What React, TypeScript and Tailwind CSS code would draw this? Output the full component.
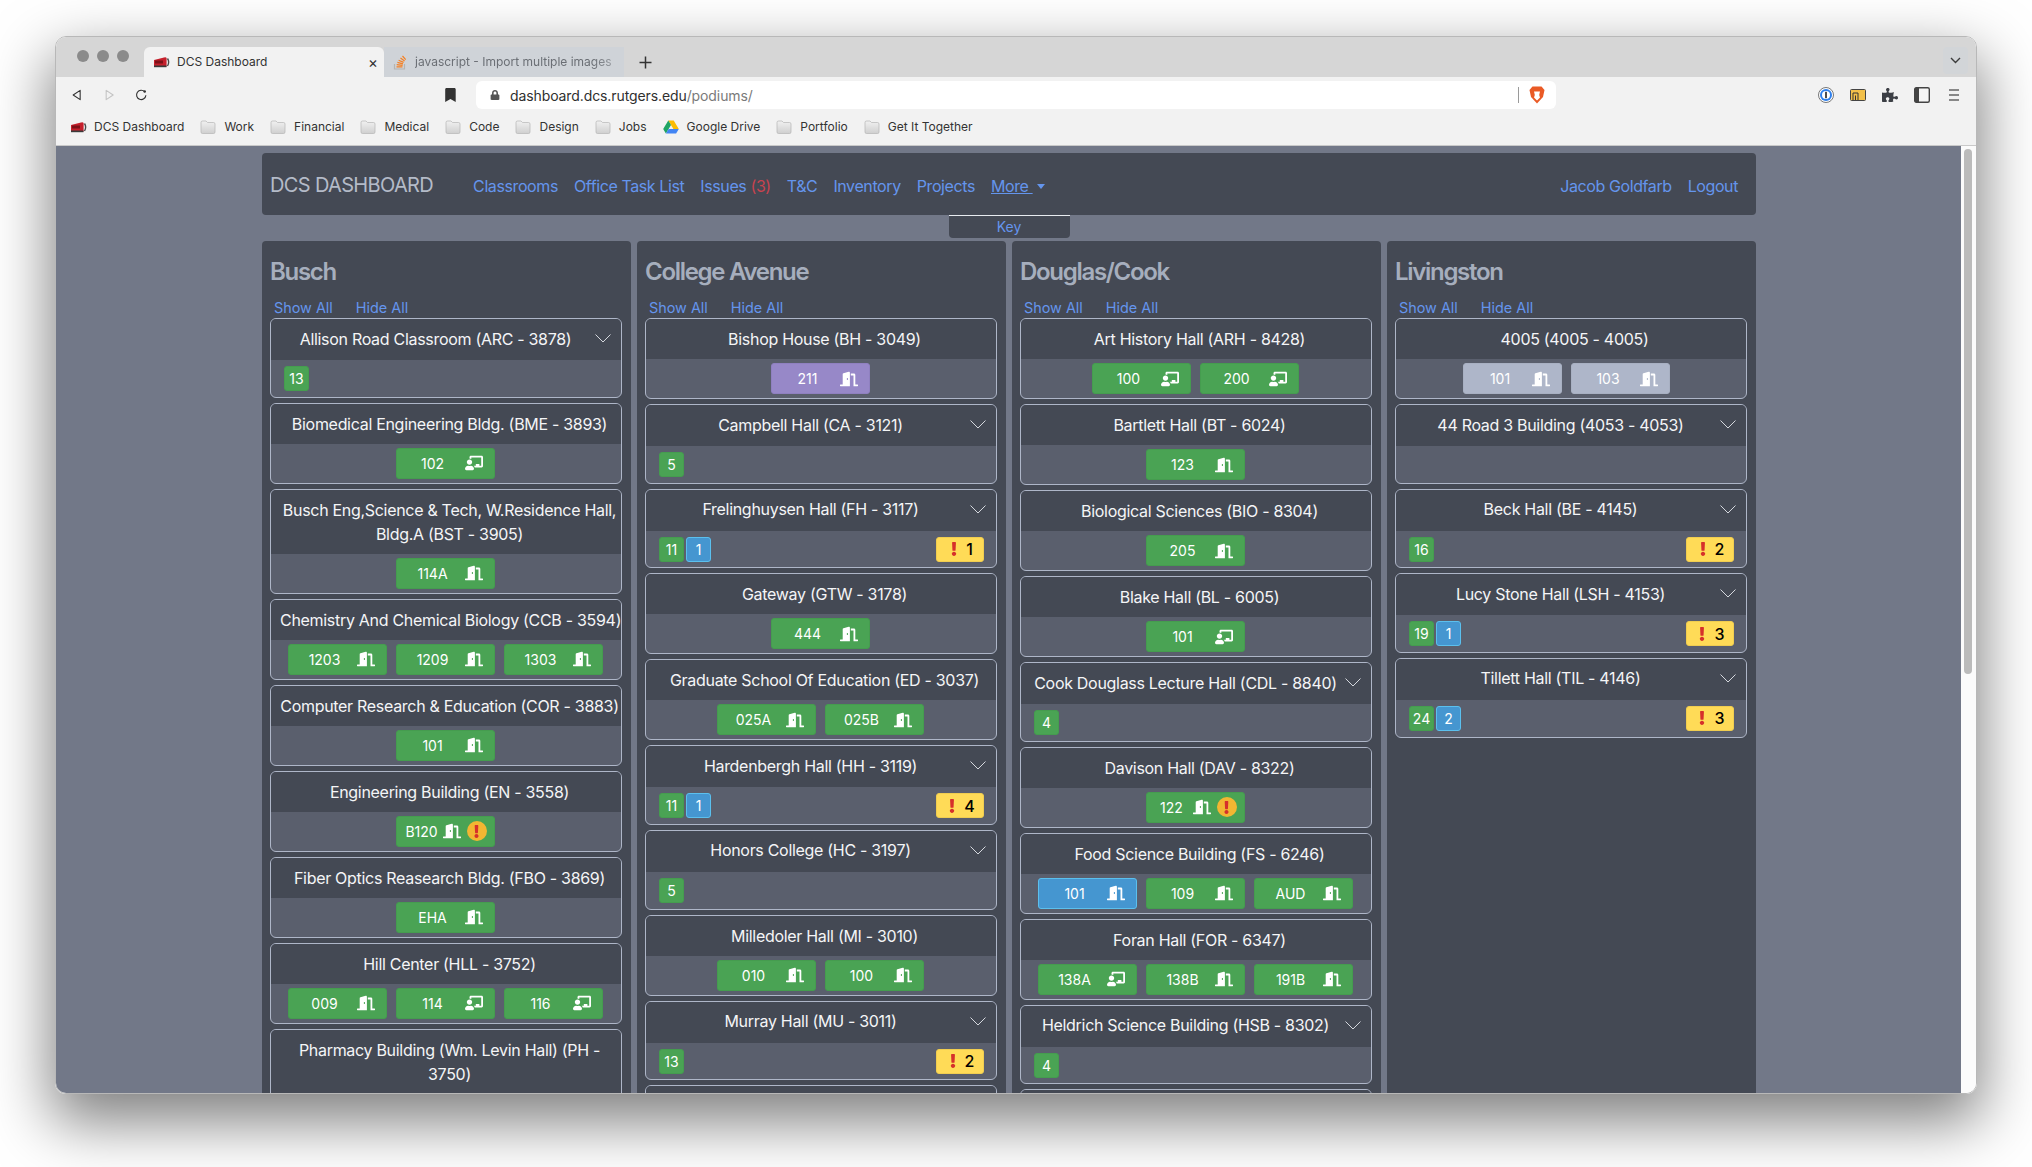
import React from "react";
import { FaDoorOpen, FaChalkboardTeacher, FaExclamation, FaPuzzlePiece, FaBookmark, FaLock } from "react-icons/fa";

type Room = { n: string; c?: "g" | "b" | "p" | "s"; t?: boolean; w?: boolean };
type Card = { name: string; rooms?: Room[]; g?: number; b?: number; y?: number; collapsed?: boolean; nw?: boolean };

const R = (n: string, extra: Partial<Room> = {}): Room => ({ n, c: "g", ...extra });

const columns: { title: string; cards: Card[] }[] = [
  {
    title: "Busch",
    cards: [
      { name: "Allison Road Classroom (ARC - 3878)", collapsed: true, g: 13 },
      { name: "Biomedical Engineering Bldg. (BME - 3893)", rooms: [R("102", { t: true })] },
      { name: "Busch Eng,Science & Tech, W.Residence Hall, Bldg.A (BST - 3905)", rooms: [R("114A")] },
      { name: "Chemistry And Chemical Biology (CCB - 3594)", nw: true, rooms: [R("1203"), R("1209"), R("1303")] },
      { name: "Computer Research & Education (COR - 3883)", nw: true, rooms: [R("101")] },
      { name: "Engineering Building (EN - 3558)", rooms: [R("B120", { w: true })] },
      { name: "Fiber Optics Reasearch Bldg. (FBO - 3869)", rooms: [R("EHA")] },
      { name: "Hill Center (HLL - 3752)", rooms: [R("009"), R("114", { t: true }), R("116", { t: true })] },
      { name: "Pharmacy Building (Wm. Levin Hall) (PH - 3750)", rooms: [] },
    ],
  },
  {
    title: "College Avenue",
    cards: [
      { name: "Bishop House (BH - 3049)", rooms: [{ n: "211", c: "p" }] },
      { name: "Campbell Hall (CA - 3121)", collapsed: true, g: 5 },
      { name: "Frelinghuysen Hall (FH - 3117)", collapsed: true, g: 11, b: 1, y: 1 },
      { name: "Gateway (GTW - 3178)", rooms: [R("444")] },
      { name: "Graduate School Of Education (ED - 3037)", rooms: [R("025A"), R("025B")] },
      { name: "Hardenbergh Hall (HH - 3119)", collapsed: true, g: 11, b: 1, y: 4 },
      { name: "Honors College (HC - 3197)", collapsed: true, g: 5 },
      { name: "Milledoler Hall (MI - 3010)", rooms: [R("010"), R("100")] },
      { name: "Murray Hall (MU - 3011)", collapsed: true, g: 13, y: 2 },
      { name: "", rooms: [] },
    ],
  },
  {
    title: "Douglas/Cook",
    cards: [
      { name: "Art History Hall (ARH - 8428)", rooms: [R("100", { t: true }), R("200", { t: true })] },
      { name: "Bartlett Hall (BT - 6024)", rooms: [R("123")] },
      { name: "Biological Sciences (BIO - 8304)", rooms: [R("205")] },
      { name: "Blake Hall (BL - 6005)", rooms: [R("101", { t: true })] },
      { name: "Cook Douglass Lecture Hall (CDL - 8840)", collapsed: true, g: 4 },
      { name: "Davison Hall (DAV - 8322)", rooms: [R("122", { w: true })] },
      { name: "Food Science Building (FS - 6246)", rooms: [{ n: "101", c: "b" }, R("109"), R("AUD")] },
      { name: "Foran Hall (FOR - 6347)", rooms: [R("138A", { t: true }), R("138B"), R("191B")] },
      { name: "Heldrich Science Building (HSB - 8302)", collapsed: true, g: 4 },
      { name: "", rooms: [] },
    ],
  },
  {
    title: "Livingston",
    cards: [
      { name: "4005 (4005 - 4005)", rooms: [{ n: "101", c: "s" }, { n: "103", c: "s" }] },
      { name: "44 Road 3 Building (4053 - 4053)", collapsed: true },
      { name: "Beck Hall (BE - 4145)", collapsed: true, g: 16, y: 2 },
      { name: "Lucy Stone Hall (LSH - 4153)", collapsed: true, g: 19, b: 1, y: 3 },
      { name: "Tillett Hall (TIL - 4146)", collapsed: true, g: 24, b: 2, y: 3 },
    ],
  },
];

function RoomButton({ room }: { room: Room }) {
  const color =
    room.c === "b"
      ? "bg-[#4596d0] border-[#5bc0ee]"
      : room.c === "p"
        ? "bg-[#9788c8] border-[#8f80c0]"
        : room.c === "s"
          ? "bg-[#aeb6c9] border-[#a8b0c2]"
          : "bg-[#4aa354] border-[#459c4f]";
  return (
    <div className={`flex h-[31px] w-[99px] items-center rounded-[3px] border pl-[4px] text-[14px] text-white ${color} ${room.w ? "pr-[7px]" : "pr-[11px]"}`}>
      <span className="flex-1 text-center">{room.n}</span>
      {room.t ? <FaChalkboardTeacher size={18} /> : <FaDoorOpen size={18} />}
      {room.w && (
        <span className="ml-[6px] flex h-[20px] w-[20px] items-center justify-center rounded-full bg-[#f2b632] text-[#d6302b]">
          <FaExclamation size={13} />
        </span>
      )}
    </div>
  );
}

function CountBadge({ v, blue }: { v: number; blue?: boolean }) {
  return (
    <div className={`flex h-[25px] w-[25px] items-center justify-center rounded-[3px] border text-[14px] text-white ${blue ? "border-[#5bc0ee] bg-[#4596d0]" : "border-[#459c4f] bg-[#4aa354]"}`}>
      {v}
    </div>
  );
}

function BuildingCard({ card }: { card: Card }) {
  if (card.collapsed) {
    return (
      <div className="mb-[5px] overflow-hidden rounded-[6px] border border-[#aeb6c8] bg-[#5a5f6d]">
        <div className="flex h-[41px] items-center bg-[#444954] pb-[2px] pl-[8px] pr-[10px] text-[16px] tracking-[-0.3px] text-[#f4f5f7]">
          <span className="flex-1 text-center whitespace-nowrap">{card.name}</span>
          <svg className="ml-[3px] shrink-0" width="16" height="9" viewBox="0 0 16 9" fill="none" stroke="#d5d8de" strokeWidth="1">
            <path d="M0.5 0.5 L8 8 L15.5 0.5" />
          </svg>
        </div>
        <div className="flex h-[36.67px] items-start gap-[2px] pl-[13px] pr-[12px] pt-[6px]">
          {card.g !== undefined && <CountBadge v={card.g} />}
          {card.b !== undefined && <CountBadge v={card.b} blue />}
          {card.y !== undefined && (
            <div className="ml-auto flex h-[25px] w-[48px] items-center justify-center gap-[5px] rounded-[3px] border border-[#f0cd50] bg-[#ffdb57] text-[16px] font-medium text-black">
              <FaExclamation size={14} className="text-[#d6302b]" />
              {card.y}
            </div>
          )}
        </div>
      </div>
    );
  }
  const silver = card.rooms?.some((r) => r.c === "s");
  return (
    <div className="mb-[5px] overflow-hidden rounded-[6px] border border-[#aeb6c8] bg-[#5a5f6d]">
      <div className={`min-h-[40px] bg-[#444954] py-[8px] pl-[9px] pr-[2px] text-center text-[16px] leading-[24px] tracking-[-0.3px] text-[#f4f5f7] ${card.nw ? "whitespace-nowrap" : ""}`}>
        {card.name}
      </div>
      <div className={`flex h-[39px] justify-center gap-[9px] pt-[4px] ${silver ? "pr-[9px]" : "pr-[2px]"}`}>
        {card.rooms?.map((r, i) => <RoomButton key={i} room={r} />)}
      </div>
    </div>
  );
}

function Folder() {
  return (
    <svg width="16" height="14" viewBox="0 0 16 14">
      <defs>
        <linearGradient id="fg" x1="0" y1="0" x2="0" y2="1">
          <stop offset="0" stopColor="#f1f1f1" />
          <stop offset="1" stopColor="#cfcfcf" />
        </linearGradient>
      </defs>
      <path d="M1 2.5 Q1 1 2.5 1 H6 L7.5 2.5 H13.5 Q15 2.5 15 4 V12 Q15 13.5 13.5 13.5 H2.5 Q1 13.5 1 12 Z" fill="url(#fg)" stroke="#b4b4b4" strokeWidth="0.7" />
    </svg>
  );
}

function Favicon() {
  return (
    <svg width="17" height="12" viewBox="0 0 17 12">
      <path d="M1 4 L11 1.5 Q13 1 13.6 2 V10.5 L2 11 Q1 11 1 10 Z" fill="#c5202c" />
      <rect x="2" y="4.5" width="8" height="3" fill="#7c1118" />
      <path d="M14.5 2.5 Q16.8 6 14.5 10" stroke="#4a4a4a" strokeWidth="1.4" fill="none" />
      <rect x="1" y="9.5" width="12.5" height="1.7" fill="#3a3a3a" />
    </svg>
  );
}

function Drive() {
  return (
    <svg width="16" height="14" viewBox="0 0 16 14">
      <path d="M5.3 0.5 H10.7 L15.8 9 H10.4 Z" fill="#fbbc04" />
      <path d="M5.3 0.5 L0.2 9 L2.9 13.5 L8 5 Z" fill="#1fa463" />
      <path d="M2.9 13.5 H13.1 L15.8 9 H5.6 Z" fill="#4285f4" />
    </svg>
  );
}

const bookmarks = ["Work", "Financial", "Medical", "Code", "Design", "Jobs", "Google Drive", "Portfolio", "Get It Together"];

function Chrome() {
  return (
    <>
      <div className="flex h-[40px] shrink-0 items-end bg-[#d6d6d6]">
        <div className="flex h-[40px] w-[88px] shrink-0 items-center gap-[8px] pb-[2px] pl-[21px]">
          <span className="h-[12px] w-[12px] rounded-full bg-[#8b8b8b]" />
          <span className="h-[12px] w-[12px] rounded-full bg-[#8b8b8b]" />
          <span className="h-[12px] w-[12px] rounded-full bg-[#8b8b8b]" />
        </div>
        <div className="flex h-[30px] w-[240px] shrink-0 items-center rounded-t-[6px] bg-[#f2f2f2] pl-[9px] pr-[6px] text-[12px] text-[#333]">
          <Favicon />
          <span className="ml-[7px] flex-1">DCS Dashboard</span>
          <span className="text-[15px] leading-none text-[#333]">×</span>
        </div>
        <div className="flex h-[30px] w-[240px] shrink-0 items-center bg-[#cfd3d8] pl-[9px] text-[12px] text-[#6b6f75]">
          <svg width="14" height="16" viewBox="0 0 14 16" fill="none" className="shrink-0">
            <path d="M1.5 10 V15 H11.5 V10" stroke="#b6b4b0" strokeWidth="1.2" />
            <path d="M3.5 12.8 H9.5 M3.7 10.6 L9.6 11.3 M4.4 8.3 L10 9.8 M5.6 6.2 L10.6 8.4 M7.5 4 L11.6 7 M9.5 2 L12.7 5.6" stroke="#f48024" strokeWidth="1.2" />
          </svg>
          <span className="ml-[8px] whitespace-nowrap [mask-image:linear-gradient(to_right,black_90%,rgba(0,0,0,0.55))]">javascript - Import multiple images</span>
        </div>
        <div className="flex h-[30px] w-[40px] shrink-0 items-center justify-center pl-[2px] text-[#333]">
          <svg width="13" height="13" viewBox="0 0 13 13" stroke="#333" strokeWidth="1.5">
            <path d="M6.5 0.5 V12.5 M0.5 6.5 H12.5" />
          </svg>
        </div>
        <div className="ml-auto mb-[3px] mr-[8px] flex h-[27px] w-[25px] items-center justify-center rounded-[4px] bg-[#d2d5d8]">
          <svg width="11" height="7" viewBox="0 0 11 7" fill="none" stroke="#3c3c3c" strokeWidth="1.4">
            <path d="M1 1 L5.5 5.5 L10 1" />
          </svg>
        </div>
      </div>
      <div className="h-[69px] shrink-0 border-b border-[#c9c9c9] bg-[#f2f2f2]">
        <div className="flex h-[36px] items-center">
          <div className="flex w-[400px] shrink-0 items-center pl-[16px]">
            <svg width="12" height="14" viewBox="0 0 12 14" fill="none" stroke="#333" strokeWidth="1.4">
              <path d="M10.5 1 L1.5 7 L10.5 13 Z" strokeLinejoin="round" />
            </svg>
            <svg className="ml-[24px]" width="12" height="14" viewBox="0 0 12 14" fill="none" stroke="#c4c4c4" strokeWidth="1.4">
              <path d="M1.5 1 L10.5 7 L1.5 13 Z" strokeLinejoin="round" />
            </svg>
            <svg className="ml-[20px]" width="16" height="16" viewBox="0 0 16 16" fill="none" stroke="#333" strokeWidth="1.5">
              <path d="M12.6 4 A6 6 0 1 0 14 8.4" />
              <circle cx="12.5" cy="3.5" r="1.6" fill="#333" stroke="none" />
            </svg>
            <FaBookmark size={14} className="ml-[298px] text-[#333]" />
          </div>
          <div className="ml-[20px] flex h-[28px] w-[1080px] shrink-0 items-center rounded-[6px] bg-white pl-[14px] pr-[11px] text-[14px] tracking-[-0.1px]">
            <FaLock size={10} className="text-[#555]" />
            <span className="ml-[10px] text-[#2f2f2f]">dashboard.dcs.rutgers.edu</span>
            <span className="text-[#7a7a7a]">/podiums/</span>
            <div className="ml-auto h-[16px] w-px bg-[#9a9a9a]" />
            <svg className="ml-[10px]" width="16" height="18" viewBox="0 0 16 18">
              <path d="M3.5 0.5 H12.5 L15.5 4 L14 11 L8 17.5 L2 11 L0.5 4 Z" fill="#ea5a25" />
              <path d="M5 5.5 H11 L10.2 9 L11 11.5 L8 14.5 L5 11.5 L5.8 9 Z" fill="#fff" />
            </svg>
          </div>
          <div className="ml-auto flex items-center gap-[16px] pr-[14px]">
            <svg width="16" height="16" viewBox="0 0 16 16">
              <circle cx="8" cy="8" r="7.5" fill="#fff" stroke="#777" strokeWidth="1" />
              <circle cx="8" cy="8" r="6" fill="#2f80ed" />
              <circle cx="8" cy="8" r="4" fill="#fff" />
              <rect x="7.2" y="4.8" width="1.6" height="6.4" fill="#222" />
            </svg>
            <svg width="16" height="12" viewBox="0 0 16 12">
              <rect x="0.5" y="0.5" width="15" height="11" rx="1" fill="#f2c04a" stroke="#444" />
              <path d="M3 11 V4 H8 V11 M5.5 11 V6.5" fill="none" stroke="#333" strokeWidth="1" />
            </svg>
            <FaPuzzlePiece size={16} className="text-[#3c3f45]" />
            <svg width="16" height="16" viewBox="0 0 16 16">
              <rect x="0.7" y="0.7" width="14.6" height="14.6" rx="1.5" fill="#f6f6f6" stroke="#444" strokeWidth="1.4" />
              <rect x="1" y="1" width="4" height="14" fill="#444" />
            </svg>
            <svg width="16" height="14" viewBox="0 0 16 14" stroke="#666" strokeWidth="1.6">
              <path d="M3 2 H13 M3 7 H13 M3 12 H13" />
            </svg>
          </div>
        </div>
        <div className="flex h-[28px] items-center gap-[16px] pl-[14px] text-[12px] text-[#333]">
          <div className="flex items-center gap-[7px]">
            <Favicon />
            DCS Dashboard
          </div>
          {bookmarks.map((b) => (
            <div key={b} className="flex items-center gap-[8px]">
              {b === "Google Drive" ? <Drive /> : <Folder />}
              {b}
            </div>
          ))}
        </div>
      </div>
    </>
  );
}

function Nav() {
  const link = "text-[#6495ed]";
  return (
    <div className="flex h-[62px] items-center rounded-[4px] bg-[#444954] pl-[8px] pr-[18px] pt-[4px] text-[16px] tracking-[-0.4px]">
      <span className="mb-[3px] mr-[40px] text-[20px] tracking-[-0.65px] text-[#b4bbc8]">DCS DASHBOARD</span>
      <div className="flex gap-[16px]">
        <span className={link}>Classrooms</span>
        <span className={link}>Office Task List</span>
        <span className={link}>
          Issues <span className="text-[#c8434f]">(3)</span>
        </span>
        <span className={link}>T&amp;C</span>
        <span className={link}>Inventory</span>
        <span className={link}>Projects</span>
        <span className={`${link} flex items-center`}>
          <span className="underline">More&nbsp;</span>
          <span className="ml-[4px] h-0 w-0 border-x-[4px] border-t-[5px] border-x-transparent border-t-[#6495ed]" />
        </span>
      </div>
      <div className="ml-auto flex gap-[16px]">
        <span className={link}>Jacob Goldfarb</span>
        <span className={link}>Logout</span>
      </div>
    </div>
  );
}

export default function App() {
  return (
    <div className="h-[1167px] w-[2032px] overflow-hidden bg-white pl-[55px] pt-[36px]" style={{ fontFamily: "Inter, 'Noto Sans', sans-serif" }}>
      <div className="flex h-[1058px] w-[1922px] flex-col overflow-hidden rounded-[11px] border border-[#b8b8b8] shadow-[0_24px_60px_4px_rgba(0,0,0,0.5)]">
        <Chrome />
        <div className="flex min-h-0 flex-1">
          <div className="min-w-0 flex-1 overflow-hidden bg-[#727888] pl-[206px] pt-[7px]">
            <div className="w-[1494px]">
              <Nav />
              <div className="flex justify-center">
                <div className="flex h-[23px] w-[121px] justify-center rounded-b-[4px] border-t border-[#e8ebf0] bg-[#444954] text-[14px] leading-[21px] text-[#6495ed]">
                  Key
                </div>
              </div>
              <div className="mt-[3px] flex gap-[6px]">
                {columns.map((col) => (
                  <div key={col.title} className="h-[900px] w-[369px] shrink-0 rounded-[4px] bg-[#444954] pl-[8px] pr-[9px] pt-[16px]">
                    <div className="text-[24px] font-semibold leading-[29px] tracking-[-1.3px] text-[#a6aebd]">{col.title}</div>
                    <div className="mt-[11px] flex h-[21px] gap-[23px] pl-[4px] text-[14.4px] leading-[21px] text-[#6495ed]">
                      <span>Show All</span>
                      <span>Hide All</span>
                    </div>
                    {col.cards.map((c, i) => (
                      <BuildingCard key={i} card={c} />
                    ))}
                  </div>
                ))}
              </div>
            </div>
          </div>
          <div className="w-[15px] shrink-0 bg-[#fbfbfb] pl-[3px] pt-[3px]">
            <div className="h-[525px] w-[8px] rounded-full bg-[#bbbbbb]" />
          </div>
        </div>
      </div>
    </div>
  );
}
